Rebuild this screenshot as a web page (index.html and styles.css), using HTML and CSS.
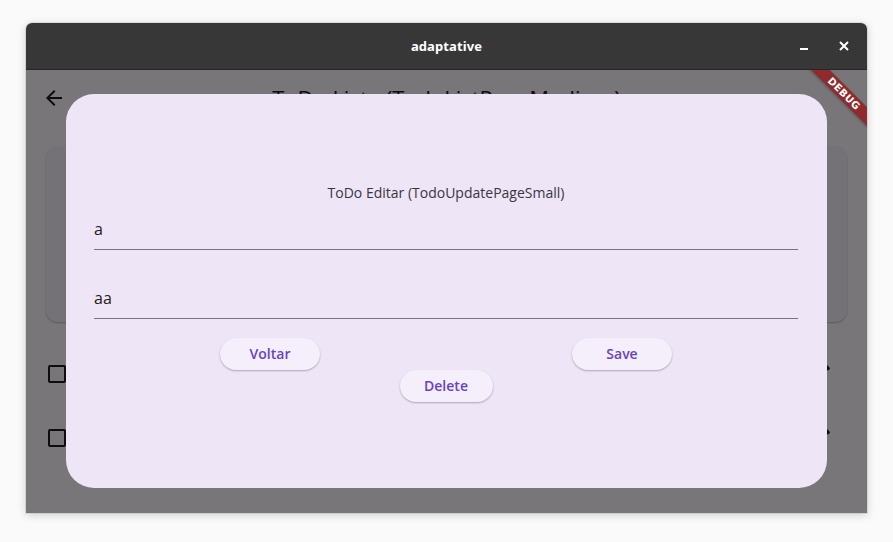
FILE: index.html
```html
<!DOCTYPE html>
<html lang="pt">
<head>
<meta charset="utf-8">
<title>adaptative</title>
<link rel="stylesheet" href="styles.css">
</head>
<body>
<div class="window">
  <div class="titlebar">
    <span class="win-title">adaptative</span>
    <div class="controls">
      <span class="ctl"><span class="min-bar"></span></span>
      <span class="ctl">
        <svg width="10" height="10" viewBox="0 0 10 10"><path d="M1 1L9 9M9 1L1 9" stroke="#fff" stroke-width="2"/></svg>
      </span>
    </div>
  </div>
  <div class="content">
    <div class="page">
      <header class="appbar">
        <svg class="icon back" width="24" height="24" viewBox="0 0 24 24"><path d="M20 11H7.830l5.59-5.59L12 4l-8 8 8 8 1.41-1.41L7.83 13H20v-2z"/></svg>
        <h1 class="page-title">ToDo Lista (TodoListPageMedium)</h1>
      </header>
      <section class="card"></section>
      <ul class="list">
        <li class="row">
          <span class="checkbox"></span>
          <span class="row-label"></span>
          <svg class="icon" width="24" height="24" viewBox="0 0 24 24"><path d="M3 17.25V21h3.75L17.81 9.94l-3.75-3.75L3 17.25zM20.71 7.04c.39-.39.39-1.020 0-1.41l-2.34-2.34a1 1 0 0 0-1.41 0l-1.83 1.83 3.75 3.75 1.83-1.83z"/></svg>
        </li>
        <li class="row">
          <span class="checkbox"></span>
          <span class="row-label"></span>
          <svg class="icon" width="24" height="24" viewBox="0 0 24 24"><path d="M3 17.25V21h3.75L17.81 9.94l-3.75-3.75L3 17.25zM20.71 7.04c.39-.39.39-1.020 0-1.41l-2.34-2.34a1 1 0 0 0-1.41 0l-1.83 1.83 3.75 3.75 1.83-1.83z"/></svg>
        </li>
      </ul>
    </div>
    <div class="scrim"></div>
    <div class="dialog">
      <div class="dialog-body">
        <p class="dialog-title">ToDo Editar (TodoUpdatePageSmall)</p>
        <div class="field">a</div>
        <div class="field field-second">aa</div>
        <div class="btn-row">
          <button class="btn">Voltar</button>
          <button class="btn">Save</button>
        </div>
        <div class="btn-row-single">
          <button class="btn btn-delete">Delete</button>
        </div>
      </div>
    </div>
    <div class="debug">DEBUG</div>
  </div>
</div>
</body>
</html>
```

FILE: styles.css
```css
* { box-sizing: border-box; }

html, body {
  margin: 0;
  padding: 0;
}

body {
  background: #fafafa;
  font-family: "Open Sans", "Noto Sans", sans-serif;
  width: 893px;
  height: 542px;
  overflow: hidden;
}

.window {
  margin: 23px 0 0 26px;
  width: 841px;
  height: 490px;
  border-radius: 6px 6px 0 0;
  box-shadow: 0 2px 10px rgba(0, 0, 0, 0.18), 0 0 0 1px rgba(0, 0, 0, 0.08);
  display: flex;
  flex-direction: column;
  overflow: hidden;
}

.titlebar {
  height: 47px;
  flex: none;
  background: #373737;
  border-bottom: 1px solid #262626;
  display: flex;
  align-items: center;
  justify-content: center;
  position: relative;
}

.win-title {
  color: #ffffff;
  font-family: "Noto Sans", sans-serif;
  font-weight: 700;
  font-size: 13px;
  letter-spacing: 0.1px;
}

.controls {
  position: absolute;
  right: 11px;
  top: 11px;
  display: flex;
  gap: 16px;
}

.ctl {
  width: 24px;
  height: 24px;
  display: flex;
  align-items: center;
  justify-content: center;
}

.min-bar {
  width: 8px;
  height: 2px;
  background: #ffffff;
  margin-top: 5px;
}

.content {
  flex: 1;
  position: relative;
  overflow: hidden;
  background: #fffbfe;
}

.page {
  display: flex;
  flex-direction: column;
}

.appbar {
  height: 56px;
  display: flex;
  align-items: center;
  padding-left: 16px;
  position: relative;
}

.icon { fill: #1d1b20; display: block; }

.page-title {
  position: absolute;
  left: 0;
  right: 0;
  text-align: center;
  margin: 0;
  font-weight: 400;
  font-size: 22px;
  color: #1d1b20;
  pointer-events: none;
}

.card {
  margin: 20px 20px 0 20px;
  height: 176px;
  border-radius: 12px;
  background: #f7f2fa;
  box-shadow: 0 1px 2px rgba(0, 0, 0, 0.25);
}

.list {
  list-style: none;
  margin: 20px 0 0 0;
  padding: 0;
}

.row {
  height: 64px;
  display: flex;
  align-items: center;
  padding: 0 34px 0 22px;
}

.checkbox {
  width: 18px;
  height: 18px;
  border: 2px solid #1d1b20;
  border-radius: 2px;
  flex: none;
}

.row-label { flex: 1; }

.scrim {
  position: absolute;
  inset: 0;
  background: rgba(0, 0, 0, 0.53);
}

.dialog {
  position: absolute;
  left: 40px;
  right: 40px;
  top: 24px;
  bottom: 25px;
  background: #eee5f7;
  border-radius: 28px;
  display: flex;
  flex-direction: column;
  justify-content: center;
  padding: 2px 29px 0 28px;
}

.dialog-body {
  display: flex;
  flex-direction: column;
}

.dialog-title {
  margin: 0;
  text-align: center;
  font-size: 14px;
  line-height: 20px;
  color: #39373d;
}

.field {
  padding: 14px 0 8px 0;
  line-height: 24px;
  font-size: 16px;
  color: #1d1b20;
  border-bottom: 1px solid #79747e;
}

.field-second { margin-top: 22px; }

.btn-row {
  margin-top: 19px;
  display: grid;
  grid-template-columns: 1fr 1fr;
  justify-items: center;
}

.btn-row-single {
  display: flex;
  justify-content: center;
}

.btn {
  height: 32px;
  width: 100px;
  border: none;
  border-radius: 16px;
  background: #f5effb;
  color: #6842c0;
  font-family: "Open Sans", "Noto Sans", sans-serif;
  font-weight: 600;
  font-size: 14px;
  box-shadow: 0 1px 2px rgba(0, 0, 0, 0.28);
  padding: 0;
}

.btn-delete { width: 93px; }

.debug {
  position: absolute;
  top: 17px;
  right: -27px;
  width: 100px;
  height: 13px;
  transform: rotate(45deg);
  background: #8f2a2d;
  color: #ffffff;
  font-family: "DejaVu Sans", sans-serif;
  font-weight: 700;
  font-size: 10px;
  line-height: 13px;
  text-align: center;
  letter-spacing: 0.4px;
  box-shadow: 0 1px 3px rgba(0, 0, 0, 0.3);
}
```
